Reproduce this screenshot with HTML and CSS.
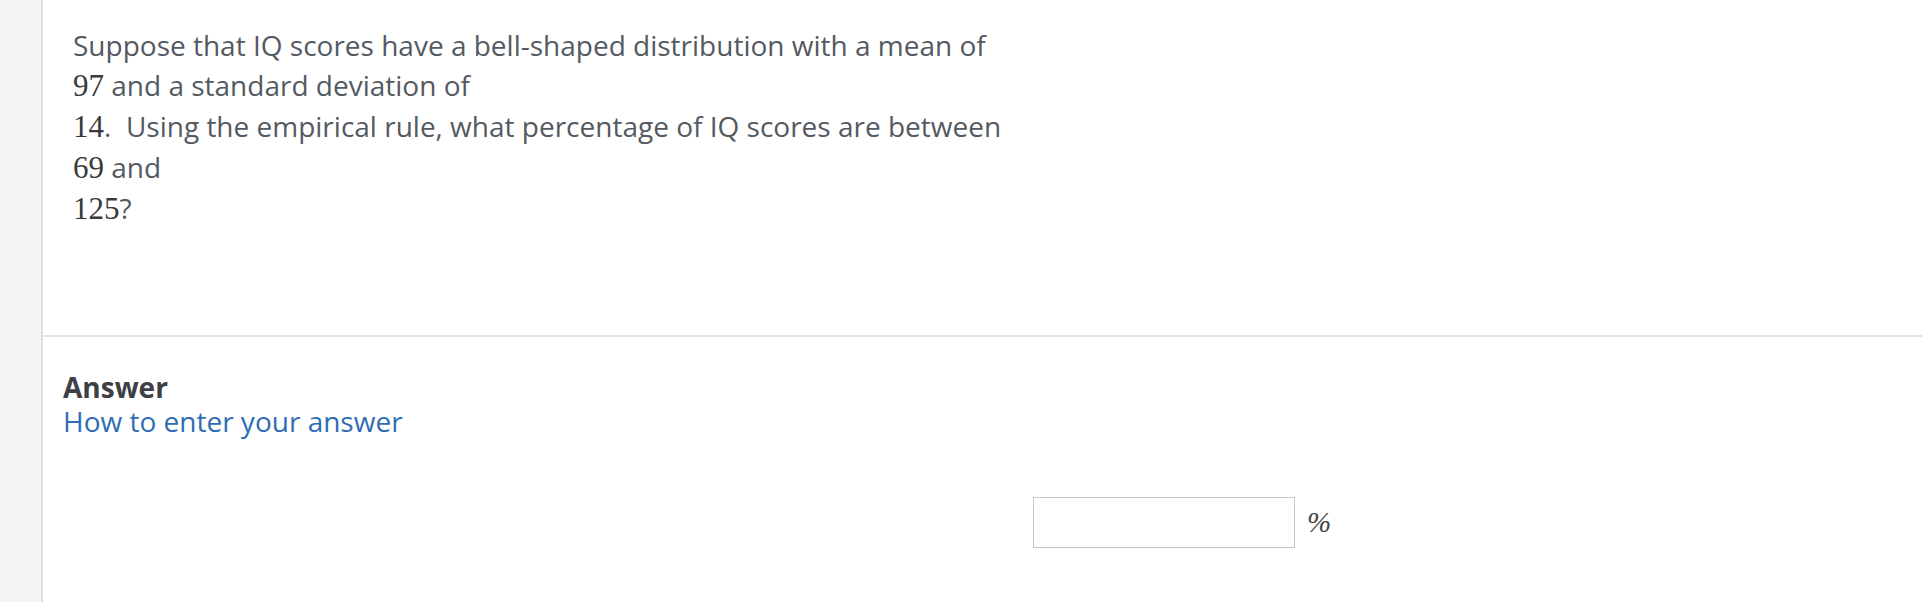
FILE: index.html
```html
<!DOCTYPE html>
<html lang="en">
<head>
<meta charset="utf-8">
<title>Question</title>
<link rel="stylesheet" href="styles.css">
</head>
<body>
<div class="page">
  <aside class="rail"></aside>
  <main class="content">
    <section class="question">
      <p class="stem">Suppose that IQ scores have a bell-shaped distribution with a mean of<br><span class="num">97</span> and a standard deviation of<br><span class="num">14</span>.&nbsp; Using the empirical rule, what percentage of IQ scores are between<br><span class="num">69</span> and<br><span class="num">125</span>?</p>
    </section>
    <section class="answer">
      <h2 class="answer-title">Answer</h2>
      <a class="help-link" href="#">How to enter your answer</a>
      <div class="answer-row">
        <input class="answer-input" type="text" aria-label="answer">
        <span class="unit">%</span>
      </div>
    </section>
  </main>
</div>
</body>
</html>
```
FILE: styles.css
```css
html, body {
  margin: 0;
  padding: 0;
  background: #ffffff;
}
body {
  font-family: "Open Sans", "Noto Sans", sans-serif;
  color: #545a61;
}
.page {
  display: flex;
  height: 602px;
}
.rail {
  width: 41px;
  flex: none;
  background: #f3f4f6;
  border-right: 2px solid #dedfe1;
}
.content {
  flex: 1;
  display: flex;
  flex-direction: column;
}
.question {
  height: 337px;
  box-sizing: border-box;
  padding: 25px 30px 0 30px;
  border-bottom: 2px solid #e2e2e2;
}
.stem {
  margin: 0;
  font-size: 28px;
  line-height: 40px;
}
.num {
  font-family: "Liberation Serif", "Times New Roman", serif;
  font-size: 31px;
  color: #3a3a3a;
}
.answer {
  padding: 33px 20px 0 20px;
  display: flex;
  flex-direction: column;
  align-items: flex-start;
}
.answer-title {
  margin: 0;
  font-size: 28px;
  line-height: 34px;
  font-weight: 700;
  color: #3d4046;
}
.help-link {
  font-size: 28px;
  line-height: 34px;
  color: #2f6db3;
  text-decoration: none;
}
.answer-row {
  display: flex;
  align-items: center;
  gap: 12px;
  margin-top: 59px;
  margin-left: 970px;
}
.answer-input {
  width: 262px;
  height: 51px;
  box-sizing: border-box;
  border: 1px solid #c4c4c4;
  margin: 0;
  padding: 0 8px;
  font-size: 20px;
}
.unit {
  font-family: "Liberation Serif", "Times New Roman", serif;
  font-style: italic;
  font-size: 29px;
  color: #444;
}
```
